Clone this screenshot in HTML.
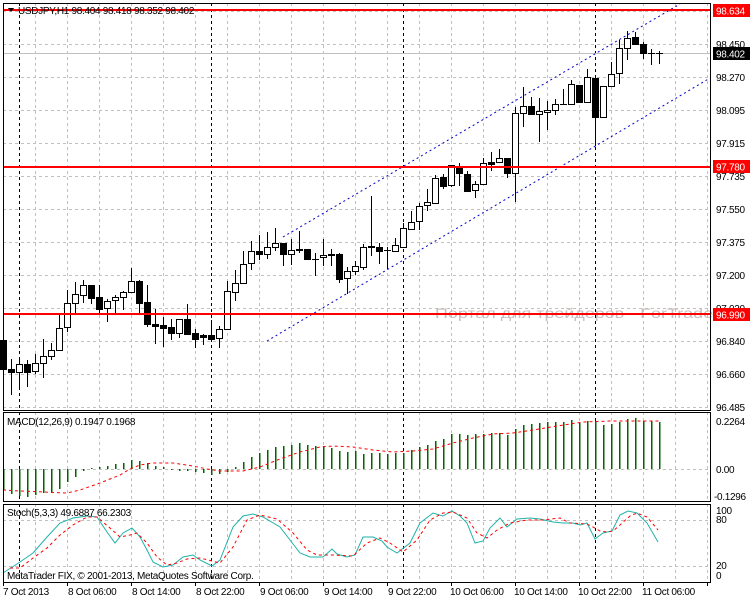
<!DOCTYPE html>
<html><head><meta charset="utf-8"><style>
html,body{margin:0;padding:0;background:#fff;}
svg{display:block;}
text{font-family:"Liberation Sans","DejaVu Sans",sans-serif;font-size:10px;letter-spacing:-0.3px;fill:#000;}
</style></head><body>
<svg id="s" width="750" height="600" xmlns="http://www.w3.org/2000/svg" shape-rendering="crispEdges">
<rect x="0" y="0" width="750" height="600" fill="#fff"/>
<g id="grid"></g>
<g id="cand"></g>
<g id="ind"></g>
<text x="435" y="318" textLength="284" lengthAdjust="spacingAndGlyphs" style="font-size:14px;letter-spacing:0;fill:#cdbcbc;">Портал для трейдеров - ForTrader</text>
<g id="lines"></g>
<g id="frame" fill="none" stroke="#000"></g>
<polygon points="8,8 14,8 11,12" fill="#000"/>
<text x="18" y="14">USDJPY,H1  98.404 98.418 98.352 98.402</text>
<text x="7" y="425">MACD(12,26,9) 0.1947 0.1968</text>
<text x="7" y="516">Stoch(5,3,3) 49.6887 66.2303</text>
<text x="7" y="579">MetaTrader FIX, © 2001-2013, MetaQuotes Software Corp.</text>
<g>
<text x="716" y="48">98.450</text>
<text x="716" y="81">98.270</text>
<text x="716" y="114">98.095</text>
<text x="716" y="147">97.915</text>
<text x="716" y="180">97.735</text>
<text x="716" y="213">97.550</text>
<text x="716" y="246">97.375</text>
<text x="716" y="279">97.200</text>
<text x="716" y="312">97.020</text>
<text x="716" y="345">96.840</text>
<text x="716" y="378">96.660</text>
<text x="716" y="411">96.485</text>
<rect x="713" y="4" width="37" height="13" fill="#f00"/><text x="716" y="14.5" style="fill:#fff">98.634</text>
<rect x="713" y="47" width="37" height="13" fill="#000"/><text x="716" y="57.5" style="fill:#fff">98.402</text>
<rect x="713" y="160" width="37" height="13" fill="#f00"/><text x="716" y="170.5" style="fill:#fff">97.780</text>
<rect x="713" y="308" width="37" height="13" fill="#f00"/><text x="716" y="318.5" style="fill:#fff">96.990</text>
<text x="716" y="425">0.2264</text>
<text x="716" y="473">0.00</text>
<text x="714" y="500">-0.1296</text>
<text x="716" y="514">100</text>
<text x="716" y="523">80</text>
<text x="716" y="569">20</text>
<text x="716" y="579">0</text>
</g>
<g>
<text x="3" y="595">7 Oct 2013</text>
<text x="68" y="595">8 Oct 06:00</text>
<text x="132" y="595">8 Oct 14:00</text>
<text x="196" y="595">8 Oct 22:00</text>
<text x="260" y="595">9 Oct 06:00</text>
<text x="324" y="595">9 Oct 14:00</text>
<text x="388" y="595">9 Oct 22:00</text>
<text x="450" y="595">10 Oct 06:00</text>
<text x="514" y="595">10 Oct 14:00</text>
<text x="578" y="595">10 Oct 22:00</text>
<text x="642" y="595">11 Oct 06:00</text>
</g>
<script>
var NS="http://www.w3.org/2000/svg";
function el(g,t,a){var e=document.createElementNS(NS,t);for(var k in a)e.setAttribute(k,a[k]);document.getElementById(g).appendChild(e);return e;}
var panels=[[3,410],[412,501],[504,582]];
for(var x=35;x<710;x+=32){panels.forEach(function(p){el("grid","line",{x1:x+.5,y1:p[0],x2:x+.5,y2:p[1],stroke:"#c0c0c0","stroke-dasharray":"3,3"});});}
for(var y=11;y<=407;y+=33){el("grid","line",{x1:3,y1:y+.5,x2:710,y2:y+.5,stroke:"#c0c0c0","stroke-dasharray":"3,3"});}
[469,520,566].forEach(function(y){el("grid","line",{x1:3,y1:y+.5,x2:710,y2:y+.5,stroke:"#c0c0c0","stroke-dasharray":"3,3"});});
[19,211,403,595].forEach(function(x){panels.forEach(function(p){el("grid","line",{x1:x+.5,y1:p[0],x2:x+.5,y2:p[1],stroke:"#000","stroke-dasharray":"3,3"});});});
el("grid","line",{x1:3,y1:53.5,x2:710,y2:53.5,stroke:"#c0c0c0"});
var C=[[340,369,340,375,1],[369,372,359,394,1],[364,372,359,388,0],[364,372,360,386,1],[363,371,354,373,0],[356,363,339,377,0],[350,356,343,359,0],[328,350,314,350,0],[303,327,290,331,0],[294,303,282,313,0],[285,295,280,302,0],[285,298,285,303,1],[297,309,285,313,1],[301,308,299,321,0],[297,300,295,312,0],[292,297,291,309,0],[281,292,268,292,0],[281,303,280,312,1],[302,324,285,326,1],[324,326,309,343,1],[325,328,317,346,1],[327,333,319,339,1],[319,333,319,337,0],[319,334,304,334,1],[333,339,329,347,1],[335,337,334,344,1],[335,339,320,339,1],[329,338,326,347,0],[291,329,281,329,0],[283,292,270,300,0],[264,283,251,283,0],[251,263,241,269,0],[251,254,235,259,1],[247,254,232,258,0],[243,247,228,250,0],[243,254,243,265,1],[250,254,239,264,0],[249,250,231,252,1],[249,259,249,259,1],[259,259,253,275,1],[255,257,239,265,0],[254,255,249,265,1],[254,279,253,282,1],[271,278,267,293,0],[266,271,261,274,0],[247,267,244,269,0],[246,247,196,255,1],[247,251,243,263,1],[250,250,247,268,1],[245,251,238,251,0],[228,247,223,247,0],[222,229,211,229,0],[206,221,203,229,0],[202,205,189,210,0],[178,203,175,203,0],[177,186,174,188,1],[165,185,165,186,0],[166,173,163,185,1],[174,191,171,191,1],[184,190,181,197,0],[163,184,158,184,0],[162,164,152,170,1],[158,162,149,162,0],[158,173,158,177,1],[113,173,107,201,0],[106,113,87,126,0],[106,114,97,114,1],[111,114,98,141,0],[110,112,101,129,0],[104,110,99,114,0],[104,104,89,104,1],[84,104,80,104,0],[85,102,85,102,1],[77,102,69,102,0],[78,117,78,145,1],[86,117,86,117,0],[74,86,62,86,0],[48,73,40,83,0],[38,48,31,59,0],[37,44,32,44,1],[44,53,42,58,1],[53,53,49,64,1],[53,53,51,63,1]];
C.forEach(function(c,i){var x=3+8*i;
 el("cand","line",{x1:x+.5,y1:c[2],x2:x+.5,y2:c[3]+1,stroke:"#000"});
 if(c[1]-c[0]<1){el("cand","line",{x1:x-3,y1:c[0]+.5,x2:x+4,y2:c[0]+.5,stroke:"#000"});}
 else el("cand","rect",{x:x-2.5,y:c[0]+.5,width:6,height:c[1]-c[0],fill:c[4]?"#000":"#fff",stroke:"#000"});
});
var M=[490,494,496,497,495,493,493,489,482,477,471,468,467,466,464,463,460,461,463,466,467,469,471,471,472,473,475,474,472,467,462,457,453,450,447,446,445,443,445,446,446,448,451,452,451,454,453,453,454,453,453,450,447,445,441,439,434,434,435,434,434,433,433,435,429,425,424,423,422,422,422,420,423,421,421,425,424,422,419,418,421,421,422];
M.forEach(function(v,i){var x=3+8*i;var a=Math.min(v,469),b=Math.max(v,469);el("ind","rect",{x:x,y:a,width:1.5,height:Math.max(1,b-a),fill:"#006400"});});
function pl(pts,col,dash,w){el("ind","polyline",{points:pts,fill:"none",stroke:col,"stroke-width":w||1,"stroke-dasharray":dash||"none","shape-rendering":"auto"});}
pl("3,490 20,491 67,493 80,490 100,483 120,475 130,469 140,465 153,463 173,463 193,466 207,469 220,471 243,471 260,467 280,459 300,452 320,447 333,446 353,447 373,450 393,452 413,451 433,449 453,443 473,438 493,434 513,433 533,430 557,426 583,422 610,421 659,421","#f00","3,3");
pl("3,573 20,562 33,553 47,537 60,523 73,518 87,516 97,517 107,532 115,543 123,533 132,528 140,537 147,550 153,562 163,567 173,565 183,557 193,555 200,560 212,566 220,560 233,527 243,516 253,514 263,517 280,527 290,540 300,553 310,557 323,557 332,549 337,554 347,557 355,555 363,537 373,537 382,541 387,547 397,553 410,543 420,523 433,513 443,516 452,511 460,516 467,523 475,543 483,541 490,528 500,518 507,527 517,519 530,518 540,519 553,522 563,523 573,523 580,525 587,523 595,539 603,533 612,531 620,515 628,511 637,513 647,523 658,542","#20b2aa");
pl("10,568 20,568 33,558 47,548 60,535 73,525 87,517 97,517 110,528 120,537 130,535 137,533 147,543 157,557 167,565 177,563 187,559 200,558 220,563 233,547 247,520 260,515 277,519 293,533 307,550 317,555 333,555 353,556 367,543 380,538 390,543 403,552 417,540 430,520 443,513 453,512 467,518 477,533 487,538 497,530 510,523 527,520 543,520 560,518 570,523 587,524 593,527 600,531 607,532 613,531 620,525 630,516 637,513 647,517 658,530","#f00","3,3");
el("lines","line",{x1:283,y1:237,x2:680,y2:4,stroke:"#0000cc","stroke-dasharray":"2,3","shape-rendering":"auto"});
el("lines","line",{x1:267,y1:341,x2:710,y2:78,stroke:"#0000cc","stroke-dasharray":"2,3","shape-rendering":"auto"});
[10,167,314].forEach(function(y){el("lines","rect",{x:3,y:y-1,width:707,height:2,fill:"#f00"});});
[[3,410],[412,501],[504,582]].forEach(function(p){el("frame","rect",{x:3.5,y:p[0]+.5,width:707,height:p[1]-p[0]});});
for(var x=3;x<710;x+=64){el("frame","line",{x1:x+.5,y1:582,x2:x+.5,y2:586});}
</script>
</svg>
</body></html>
